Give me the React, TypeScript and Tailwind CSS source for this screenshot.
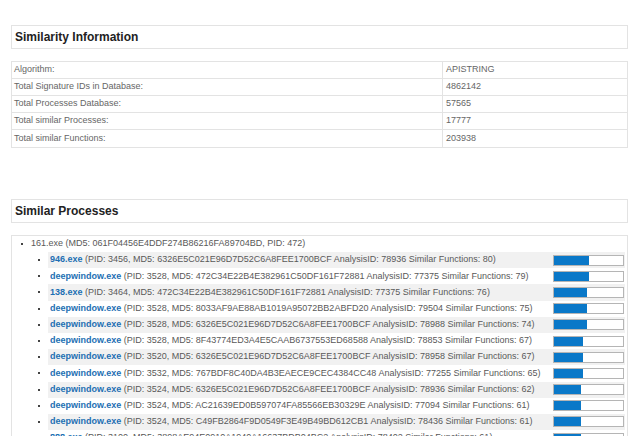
import React from "react";

type Proc = {
  name: string;
  pid: number;
  md5: string;
  analysisId: number;
  functions: number;
};

const info = [
  ["Algorithm:", "APISTRING"],
  ["Total Signature IDs in Database:", "4862142"],
  ["Total Processes Database:", "57565"],
  ["Total similar Processes:", "17777"],
  ["Total similar Functions:", "203938"],
];

const processes: Proc[] = [
  { name: "946.exe", pid: 3456, md5: "6326E5C021E96D7D52C6A8FEE1700BCF", analysisId: 78936, functions: 80 },
  { name: "deepwindow.exe", pid: 3528, md5: "472C34E22B4E382961C50DF161F72881", analysisId: 77375, functions: 79 },
  { name: "138.exe", pid: 3464, md5: "472C34E22B4E382961C50DF161F72881", analysisId: 77375, functions: 76 },
  { name: "deepwindow.exe", pid: 3528, md5: "8033AF9AE88AB1019A95072BB2ABFD20", analysisId: 79504, functions: 75 },
  { name: "deepwindow.exe", pid: 3528, md5: "6326E5C021E96D7D52C6A8FEE1700BCF", analysisId: 78988, functions: 74 },
  { name: "deepwindow.exe", pid: 3528, md5: "8F43774ED3A4E5CAAB6737553ED68588", analysisId: 78853, functions: 67 },
  { name: "deepwindow.exe", pid: 3520, md5: "6326E5C021E96D7D52C6A8FEE1700BCF", analysisId: 78958, functions: 67 },
  { name: "deepwindow.exe", pid: 3532, md5: "767BDF8C40DA4B3EAECE9CEC4384CC48", analysisId: 77255, functions: 65 },
  { name: "deepwindow.exe", pid: 3524, md5: "6326E5C021E96D7D52C6A8FEE1700BCF", analysisId: 78936, functions: 62 },
  { name: "deepwindow.exe", pid: 3524, md5: "AC21639ED0B597074FA85566EB30329E", analysisId: 77094, functions: 61 },
  { name: "deepwindow.exe", pid: 3524, md5: "C49FB2864F9D0549F3E49B49BD612CB1", analysisId: 78436, functions: 61 },
  { name: "888.exe", pid: 3100, md5: "3898AE94E0910A1940A16637BDB04BC2", analysisId: 78402, functions: 61 },
];

const Heading = ({ title }: { title: string }) => (
  <div className="h-[24px] border border-[#e3e3e3] px-[3px] flex items-center text-[12px] font-bold text-[#222]">
    {title}
  </div>
);

const App = () => {
  return (
    <div
      className="w-[640px] h-[436px] overflow-hidden bg-white pl-[11px] pr-[12px] pt-[25px]"
      style={{ fontFamily: '"Liberation Sans", Arial, sans-serif' }}
    >
      <Heading title="Similarity Information" />

      <div className="mt-[12px] border border-[#e3e3e3] text-[9px] text-[#666]">
        {info.map(([label, value], i) => (
          <div
            key={label}
            className={
              "flex h-[17px] items-center " +
              (i < info.length - 1 ? "border-b border-[#e3e3e3]" : "")
            }
          >
            <div className="w-[431px] h-full flex items-center pl-[2px] border-r border-[#e3e3e3]">
              {label}
            </div>
            <div className="pl-[3px]">{value}</div>
          </div>
        ))}
      </div>

      <div className="mt-[51px]">
        <Heading title="Similar Processes" />
      </div>

      <div className="mt-[12px] border border-[#e3e3e3] text-[9px] text-[#595959] h-[300px]">
        <div className="flex items-center h-[16px]">
          <span className="ml-[9px] w-[2px] h-[2px] bg-[#444]" />
          <span className="ml-[8px]">
            161.exe (MD5: 061F04456E4DDF274B86216FA89704BD, PID: 472)
          </span>
        </div>
        {processes.map((p, i) => (
          <div key={i} className="flex items-center h-[16.2px]">
            <span className="ml-[26px] w-[2px] h-[2px] bg-[#444] shrink-0" />
            <div
              className={
                "ml-[8px] mr-[2px] flex-1 h-full flex items-center pl-[2px] " +
                (i % 2 === 0 ? "bg-[#f1f1f1]" : "")
              }
            >
              <span className="flex-1 whitespace-nowrap overflow-hidden">
                <span className="font-bold text-[#1d6fb3]">{p.name}</span> (PID:{" "}
                {p.pid}, MD5: {p.md5} AnalysisID: {p.analysisId} Similar
                Functions: {p.functions})
              </span>
              <div className="w-[71px] h-[11px] border border-[#b5b5b5] bg-white shrink-0 mr-[1px]">
                <div
                  className="h-full bg-[#0a78c8]"
                  style={{ width: `${Math.round(p.functions * 0.44)}px` }}
                />
              </div>
            </div>
          </div>
        ))}
      </div>
    </div>
  );
};

export default App;
